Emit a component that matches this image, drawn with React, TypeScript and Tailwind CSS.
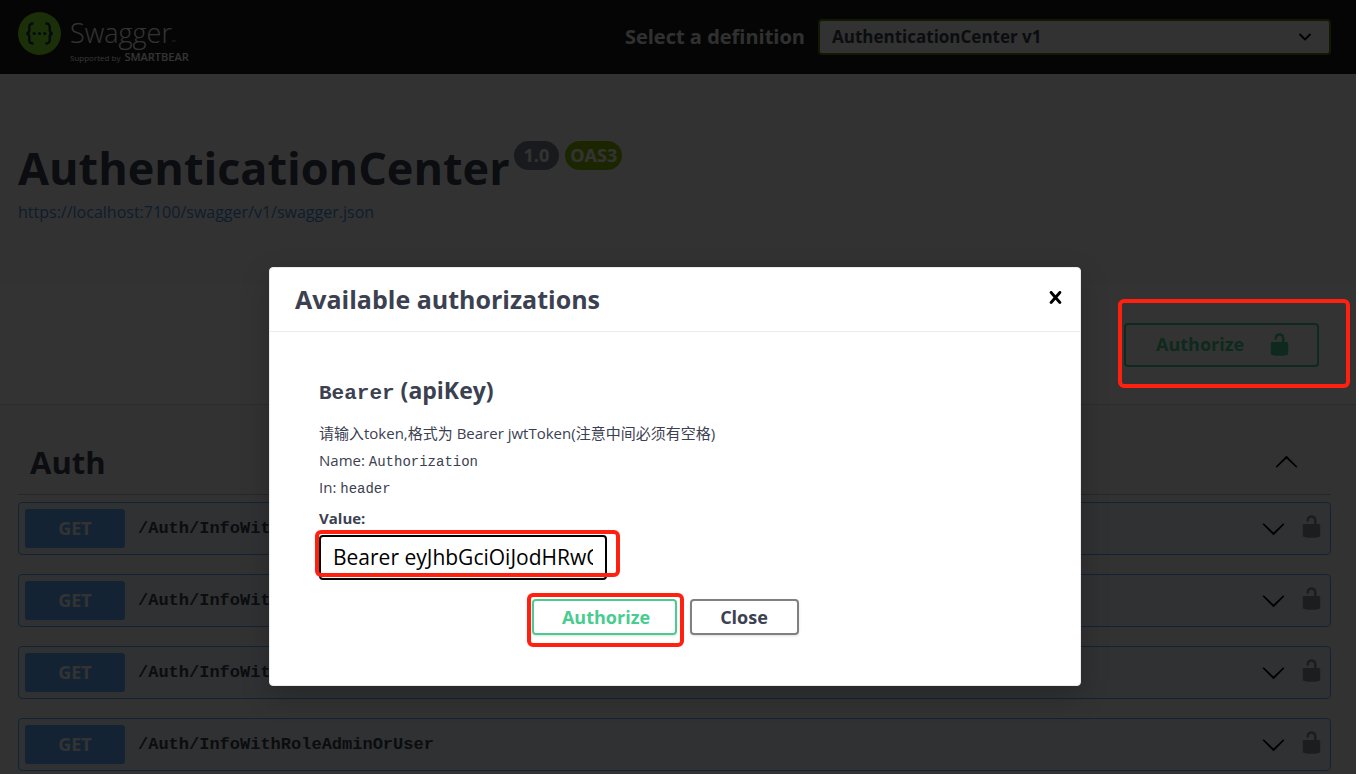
import { useState } from "react";

const paths = ["/Auth/InfoWithAuth", "/Auth/InfoWithRole", "/Auth/InfoWithPolicy", "/Auth/InfoWithRoleAdminOrUser"];

function Unlocked({ className }: { className: string }) {
  return (
    <svg viewBox="0 0 20 20" fill="currentColor" aria-hidden="true" className={className}>
      <path d="M15.8 8H14V5.6C14 2.703 12.665 1 10 1 7.334 1 6 2.703 6 5.6V6h2v-.801C8 3.754 8.797 3 10 3c1.203 0 2 .754 2 2.199V8H4c-.553 0-1 .646-1 1.199V17c0 .549.428 1.139.951 1.307l1.197.387C5.672 18.861 6.55 19 7.1 19h5.8c.549 0 1.428-.139 1.951-.307l1.196-.387c.524-.167.953-.757.953-1.306V9.199C17 8.646 16.352 8 15.8 8z" />
    </svg>
  );
}

function Arrow({ className }: { className: string }) {
  return (
    <svg viewBox="0 0 20 20" fill="currentColor" aria-hidden="true" className={className}>
      <path d="M17.418 6.109c.272-.268.709-.268.979 0s.271.701 0 .969l-7.908 7.83c-.27.268-.707.268-.979 0l-7.908-7.83c-.27-.268-.27-.701 0-.969.271-.268.709-.268.979 0L10 13.25l7.418-7.141z" />
    </svg>
  );
}

function Logo() {
  return (
    <a href="#" aria-label="Swagger" className="flex items-start gap-[9px]">
      <svg viewBox="0 0 43 43" aria-hidden="true" className="size-[43px]">
        <circle cx="21.5" cy="21.5" r="21.5" fill="#85ea2d" />
        <g fill="none" stroke="#173647" strokeWidth="2.4">
          <path d="M15.5 11.6c-3.2-.3-4.2.9-4.2 3.6v2.6c0 2.3-.7 3.6-3 3.7 2.3.1 3 1.4 3 3.7v2.6c0 2.7 1 3.9 4.2 3.6" />
          <path d="M27.5 11.6c3.2-.3 4.2.9 4.2 3.6v2.6c0 2.3.7 3.6 3 3.7-2.3.1-3 1.4-3 3.7v2.6c0 2.7-1 3.9-4.2 3.6" />
        </g>
        <g fill="#173647">
          <circle cx="16.2" cy="21.5" r="1.6" />
          <circle cx="21.5" cy="21.5" r="1.6" />
          <circle cx="26.8" cy="21.5" r="1.6" />
        </g>
      </svg>
      <span className="block pt-1 text-white">
        <span className="flex items-end font-light text-[27px] leading-[34px]">
          Swagger<span className="text-[5px] leading-4">™</span>
        </span>
        <span className="flex items-baseline gap-1 text-[8px] leading-[14px]">
          Supported by <b className="text-[11px] font-semibold">SMARTBEAR</b>
        </span>
      </span>
    </a>
  );
}

function Operation({ path }: { path: string }) {
  return (
    <div className="flex items-center rounded border border-[#61affe] bg-[#61affe]/10 p-1.5">
      <button type="button" className="flex grow items-center text-left">
        <span className="w-[100px] rounded-[3px] bg-[#61affe] text-center text-[18px] font-bold leading-[39px] text-white">GET</span>
        <span className="grow pl-[13px] font-['Liberation_Mono',monospace] text-[17px] font-bold">{path}</span>
        <Arrow className="mr-[13px] size-[25px] text-black" />
      </button>
      <button type="button" aria-label="Authorization button unlocked" className="text-black opacity-40">
        <Unlocked className="mb-1 size-[25px]" />
      </button>
    </div>
  );
}

export default function App() {
  const [token, setToken] = useState("Bearer eyJhbGciOiJodHRwOi8vd3d3LnczLm9yZy8yMDAx");
  return (
    <div className="h-screen overflow-hidden bg-white pr-[3px] font-['Open_Sans','Noto_Sans_CJK_SC',sans-serif] text-[#3b4151]">
      <div className="relative h-full overflow-hidden bg-[#fafafa]">
        <header className="flex h-[74px] justify-between bg-[#1b1b1b] pl-[18px] pr-[25px] pt-3">
          <Logo />
          <div className="flex h-[50px] items-center gap-[13px]">
            <label htmlFor="definition" className="text-[20px] font-bold text-[#f0f0f0]">Select a definition</label>
            <div className="relative w-[38vw] max-w-[513px]">
              <select id="definition" className="block h-9 w-full appearance-none rounded border-2 border-[#547f00] bg-[#f7f7f7] pl-3 text-[17px] font-bold leading-6">
                <option>AuthenticationCenter v1</option>
              </select>
              <svg viewBox="0 0 14 8" aria-hidden="true" className="pointer-events-none absolute right-[19px] top-3.5 h-2 w-3.5">
                <path d="M1.5 1l5.5 5.5L12.5 1" fill="none" stroke="#000" strokeWidth="1.8" />
              </svg>
            </div>
          </div>
        </header>

        <section className="h-[210px] pl-[18px] pt-[62px]">
          <div className="flex items-start">
            <h1 className="text-[45px] font-bold leading-[64px]">AuthenticationCenter</h1>
            <span className="ml-1 mt-[5px] rounded-full bg-[#7d8492] px-2.5 text-[18px] font-bold leading-[29px] text-white">1.0</span>
            <span className="ml-1.5 mt-[5px] rounded-full bg-[#89bf04] px-[5px] text-[18px] font-bold leading-[29px] text-white">OAS3</span>
          </div>
          <a href="#" className="block text-[16px] leading-6 text-[#4990e2]">https://localhost:7100/swagger/v1/swagger.json</a>
        </section>

        <section className="flex h-[121px] items-center justify-end border-b border-black/15 bg-white pr-[37px] pt-0.5">
          <button type="button" className="flex h-11 w-[195px] items-center justify-between rounded border-2 border-[#49cc90] pb-0.5 pl-[30px] pr-[25px] text-[18px] font-bold text-[#49cc90]">
            Authorize
            <Unlocked className="size-[25px]" />
          </button>
        </section>

        <main className="pl-[18px] pr-[25px]">
          <h2 className="mt-8">
            <button type="button" className="flex w-full items-center justify-between border-b border-[#3b4151]/30 pb-[7px] pl-3 pr-8 text-[31px] font-bold leading-[50px]">
              Auth
              <Arrow className="size-[25px] rotate-180 text-black" />
            </button>
          </h2>
          <div className="mt-[7px] flex flex-col gap-[19px]">
            {paths.map((path) => (
              <Operation key={path} path={path} />
            ))}
          </div>
        </main>

        <div className="absolute inset-0 flex items-start justify-center bg-black/80 pr-1.5 pt-[267px]">
          <div role="dialog" aria-labelledby="dialog-title" className="w-full max-w-[812px] rounded border border-[#ebebeb] bg-white pb-[50px] shadow-[0_10px_30px_rgba(0,0,0,0.2)]">
            <div className="flex h-16 items-center justify-between border-b border-[#ebebeb] pl-[25px] pr-3">
              <h3 id="dialog-title" className="text-[25px] font-bold">Available authorizations</h3>
              <button type="button" aria-label="Close dialog" className="pb-1 text-black">
                <svg viewBox="0 0 20 20" fill="currentColor" aria-hidden="true" className="size-[25px]">
                  <path d="M14.348 14.849c-.469.469-1.229.469-1.697 0L10 11.819l-2.651 3.029c-.469.469-1.229.469-1.697 0-.469-.469-.469-1.229 0-1.697l2.758-3.15-2.759-3.152c-.469-.469-.469-1.228 0-1.697.469-.469 1.228-.469 1.697 0L10 8.183l2.651-3.031c.469-.469 1.228-.469 1.697 0 .469.469.469 1.229 0 1.697l-2.758 3.152 2.758 3.15c.469.469.469 1.229 0 1.698z" />
                </svg>
              </button>
            </div>
            <form className="px-[49px] pt-[42px] text-[15px] leading-[27px]" onSubmit={(event) => event.preventDefault()}>
              <h4 className="text-[23px] font-bold leading-8">
                <code className="font-['Liberation_Mono',monospace] text-[21px] leading-none">Bearer</code> (apiKey)
              </h4>
              <p className="mt-3.5">请输入token,格式为 Bearer jwtToken(注意中间必须有空格)</p>
              <p>Name: <code className="font-['Liberation_Mono',monospace] text-[14px] leading-none">Authorization</code></p>
              <p>In: <code className="font-['Liberation_Mono',monospace] text-[14px] leading-none">header</code></p>
              <label htmlFor="token" className="mt-1 block font-bold">Value:</label>
              <div className="relative mt-[3px] w-[288px]">
                <input id="token" type="text" value={token} onChange={(event) => setToken(event.target.value)} className="block h-[45px] w-full rounded border-2 border-black bg-white px-3 pb-0.5 text-[21px] text-black outline-none" />
                <span className="pointer-events-none absolute -left-1 -right-[13px] -top-[5px] bottom-[3px] rounded-md border-4 border-[#ff2010]" />
              </div>
              <div className="mt-[19px] flex justify-center gap-[13px] pr-5 text-[18px] font-bold">
                <div className="relative">
                  <button type="submit" className="block h-9 w-[145px] rounded border-2 border-[#49cc90] pl-1 leading-8 text-[#49cc90] shadow-sm">Authorize</button>
                  <span className="pointer-events-none absolute -bottom-3 -left-[5px] -right-[7px] -top-1.5 rounded-md border-4 border-[#ff2010]" />
                </div>
                <button type="button" className="h-9 w-[109px] rounded border-2 border-[#808080] leading-8 shadow-sm">Close</button>
              </div>
            </form>
          </div>
        </div>

        <span className="pointer-events-none absolute right-1.5 top-[299px] h-[89px] w-[232px] rounded-md border-4 border-[#ff2010]" />
      </div>
    </div>
  );
}
